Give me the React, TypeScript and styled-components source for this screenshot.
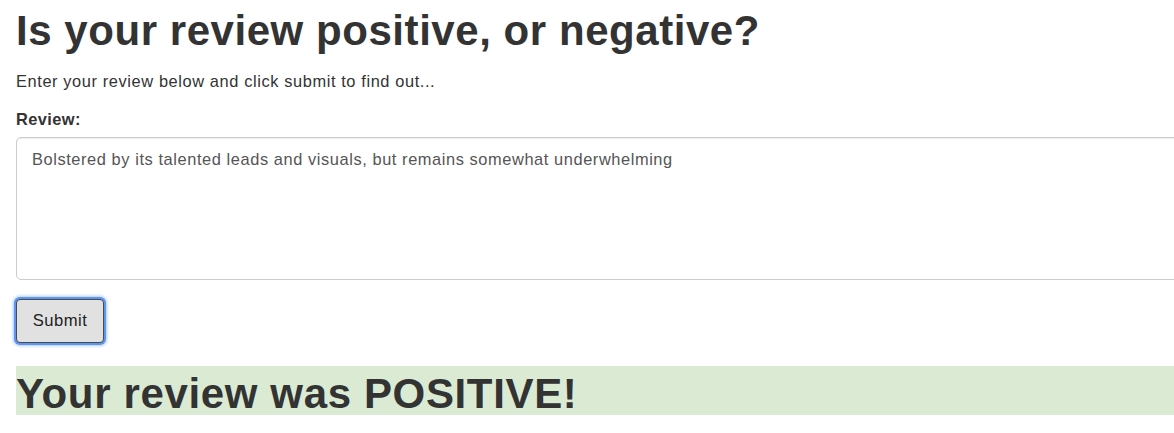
import React from "react";
import styled, { createGlobalStyle } from "styled-components";

const Global = createGlobalStyle`
  html, body { margin: 0; padding: 0; background: #fff; }
  body {
    font-family: "Liberation Sans", Arial, Helvetica, sans-serif;
    color: #333;
    overflow: hidden;
  }
`;

const Page = styled.div`
  width: 1240px;
  padding: 0 0 0 16px;
  display: flex;
  flex-direction: column;
`;

const Title = styled.h1`
  margin: 8px 0 0;
  font-size: 42px;
  font-weight: 700;
  line-height: 46px;
  letter-spacing: 0.55px;
  color: #333;
`;

const Lead = styled.p`
  margin: 16px 0 0;
  font-size: 16.4px;
  line-height: 22px;
  letter-spacing: 0.6px;
`;

const Form = styled.form`
  display: flex;
  flex-direction: column;
  margin-top: 16px;
`;

const Label = styled.label`
  font-size: 16.4px;
  font-weight: 700;
  line-height: 22px;
  letter-spacing: 0.4px;
  margin-bottom: 7px;
`;

const TextArea = styled.textarea`
  box-sizing: border-box;
  width: 1240px;
  height: 143px;
  padding: 10px 15px;
  border: 1px solid #ccc;
  border-radius: 5px;
  box-shadow: inset 0 1px 1px rgba(0, 0, 0, 0.075);
  font-family: "Liberation Sans", Arial, Helvetica, sans-serif;
  font-size: 16.4px;
  line-height: 22px;
  letter-spacing: 0.58px;
  color: #555;
  resize: none;
  outline: none;
`;

const Button = styled.button`
  align-self: flex-start;
  margin-top: 19px;
  box-sizing: border-box;
  width: 88px;
  height: 44px;
  border: 1px solid #4a4a4a;
  border-radius: 4px;
  background: #e1e1e1;
  box-shadow: 0 0 0 2px #5b96f0, 0 0 3px 3px rgba(91, 150, 240, 0.5);
  font-family: "Liberation Sans", Arial, Helvetica, sans-serif;
  font-size: 16.6px;
  letter-spacing: 0.5px;
  color: #222;
  padding: 0;
`;

const Result = styled.h1`
  margin: 23px 0 0;
  width: 1240px;
  height: 49px;
  background: #dbebd3;
  font-size: 42px;
  font-weight: 700;
  line-height: 56px;
  letter-spacing: 0.64px;
  color: #333;
  overflow: visible;
`;

export default function App() {
  return (
    <>
      <Global />
      <Page>
        <Title>Is your review positive, or negative?</Title>
        <Lead>Enter your review below and click submit to find out...</Lead>
        <Form onSubmit={(e) => e.preventDefault()}>
          <Label htmlFor="review">Review:</Label>
          <TextArea
            id="review"
            defaultValue="Bolstered by its talented leads and visuals, but remains somewhat underwhelming"
          />
          <Button type="submit">Submit</Button>
        </Form>
        <Result>Your review was POSITIVE!</Result>
      </Page>
    </>
  );
}
